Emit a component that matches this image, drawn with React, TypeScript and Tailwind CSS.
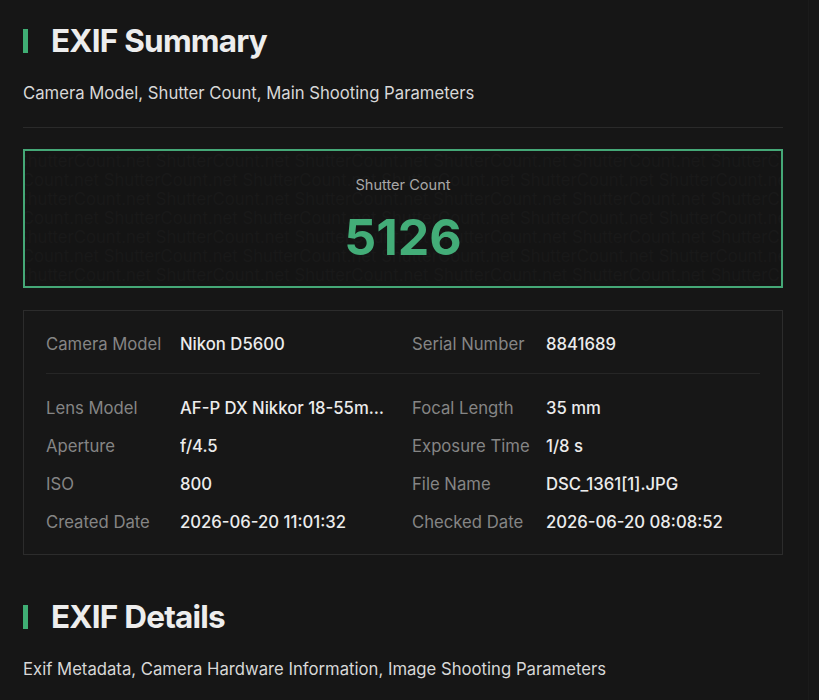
const SUMMARY_ROWS: Array<[string, string, string, string]> = [
  ["Lens Model", "AF-P DX Nikkor 18-55mm f/3.5-5.6G VR", "Focal Length", "35 mm"],
  ["Aperture", "f/4.5", "Exposure Time", "1/8 s"],
  ["ISO", "800", "File Name", "DSC_1361[1].JPG"],
  ["Created Date", "2026-06-20 11:01:32", "Checked Date", "2026-06-20 08:08:52"],
];

const WATERMARK_OFFSETS = [-8, -60, -8, -60, -8, -60, -8];

function SectionHeading({ title, subtitle }: { title: string; subtitle: string }) {
  return (
    <div>
      <div className="flex items-center gap-[23px] h-9">
        <span className="block w-[5px] h-6 bg-[#3fae74]" />
        <h2 className="text-[31.5px] leading-9 font-bold tracking-[-0.025em] text-[#ededed]">
          {title}
        </h2>
      </div>
      <p className="mt-[22px] text-[16.7px] leading-6 text-[#d8d8d8]">{subtitle}</p>
    </div>
  );
}

function Field({ label, value }: { label: string; value: string }) {
  return (
    <div className="flex items-center min-w-0">
      <span className="w-[134px] shrink-0 text-[16.7px] text-[#858585]">{label}</span>
      <span className="max-w-[206px] truncate text-[16.7px] font-medium text-[#ececec]">
        {value}
      </span>
    </div>
  );
}

export default function App() {
  const line = "ShutterCount.net ".repeat(8);

  return (
    <div
      className="min-h-[700px] bg-[#161616] text-white"
      style={{ fontFamily: "Inter, 'Noto Sans', sans-serif" }}
    >
      <div className="w-[809px] min-h-[700px] border-r border-[#1b1b1b] px-[23px] pt-[23px] pb-8">
        <SectionHeading
          title="EXIF Summary"
          subtitle="Camera Model, Shutter Count, Main Shooting Parameters"
        />

        <div className="mt-[22px] w-[760px] border-t border-[#2a2a2a]" />

        {/* shutter count box */}
        <div className="relative mt-[21px] w-[760px] h-[139px] overflow-hidden border-2 border-[#45a877] bg-[#141414]">
          <div className="absolute inset-0 pt-[1px] select-none">
            {WATERMARK_OFFSETS.map((off, i) => (
              <div
                key={i}
                className="whitespace-nowrap text-[16.7px] leading-[19px] text-[#191919]"
                style={{ marginLeft: off }}
              >
                {line}
              </div>
            ))}
          </div>
          <div className="relative flex flex-col items-center pt-[24px]">
            <span className="text-[14.6px] leading-5 text-[#a8a8a8]">Shutter Count</span>
            <span className="mt-[14px] text-[50px] leading-[56px] font-bold text-[#43ad78]">
              5126
            </span>
          </div>
        </div>

        {/* details card */}
        <div className="mt-[22px] w-[760px] border border-[#2c2c2c] bg-[#171717] px-[22px] pt-[21px] pb-[18px]">
          <div className="grid grid-cols-2 gap-x-[18px] h-[26px] items-center">
            <Field label="Camera Model" value="Nikon D5600" />
            <Field label="Serial Number" value="8841689" />
          </div>
          <div className="mt-[15px] border-t border-[#262626]" />
          <div className="mt-[22px] flex flex-col gap-[12px]">
            {SUMMARY_ROWS.map(([l1, v1, l2, v2]) => (
              <div key={l1} className="grid grid-cols-2 gap-x-[18px] h-[26px] items-center">
                <Field label={l1} value={v1} />
                <Field label={l2} value={v2} />
              </div>
            ))}
          </div>
        </div>

        <div className="mt-[44px]">
          <SectionHeading
            title="EXIF Details"
            subtitle="Exif Metadata, Camera Hardware Information, Image Shooting Parameters"
          />
        </div>
      </div>
    </div>
  );
}
